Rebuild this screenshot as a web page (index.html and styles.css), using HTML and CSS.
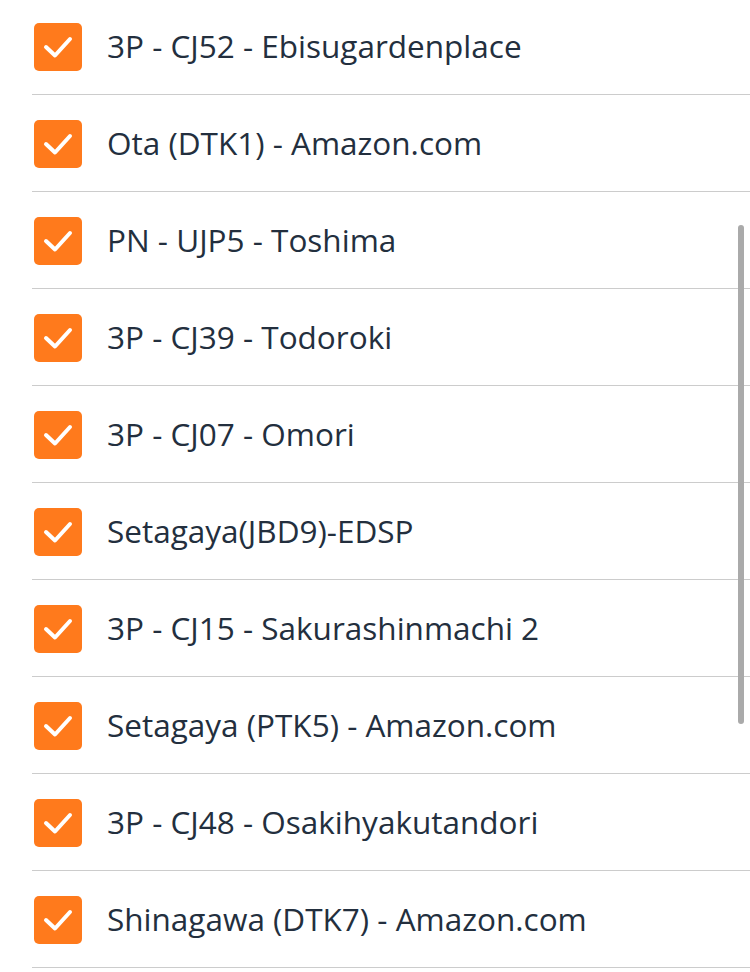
FILE: index.html
```html
<html>
    <head>
        <link rel="stylesheet" href="styles.css">
    </head>
    <body>
        <div class="list">
            <div class="row"><span class="box"><svg viewBox="0 0 48 48"><path d="M12 24 L21 32.5 L36 16"/></svg></span><span class="label">3P - CJ52 - Ebisugardenplace</span></div>
            <div class="row"><span class="box"><svg viewBox="0 0 48 48"><path d="M12 24 L21 32.5 L36 16"/></svg></span><span class="label">Ota (DTK1) - Amazon.com</span></div>
            <div class="row"><span class="box"><svg viewBox="0 0 48 48"><path d="M12 24 L21 32.5 L36 16"/></svg></span><span class="label">PN - UJP5 - Toshima</span></div>
            <div class="row"><span class="box"><svg viewBox="0 0 48 48"><path d="M12 24 L21 32.5 L36 16"/></svg></span><span class="label">3P - CJ39 - Todoroki</span></div>
            <div class="row"><span class="box"><svg viewBox="0 0 48 48"><path d="M12 24 L21 32.5 L36 16"/></svg></span><span class="label">3P - CJ07 - Omori</span></div>
            <div class="row"><span class="box"><svg viewBox="0 0 48 48"><path d="M12 24 L21 32.5 L36 16"/></svg></span><span class="label">Setagaya(JBD9)-EDSP</span></div>
            <div class="row"><span class="box"><svg viewBox="0 0 48 48"><path d="M12 24 L21 32.5 L36 16"/></svg></span><span class="label">3P - CJ15 - Sakurashinmachi 2</span></div>
            <div class="row"><span class="box"><svg viewBox="0 0 48 48"><path d="M12 24 L21 32.5 L36 16"/></svg></span><span class="label">Setagaya (PTK5) - Amazon.com</span></div>
            <div class="row"><span class="box"><svg viewBox="0 0 48 48"><path d="M12 24 L21 32.5 L36 16"/></svg></span><span class="label">3P - CJ48 - Osakihyakutandori</span></div>
            <div class="row"><span class="box"><svg viewBox="0 0 48 48"><path d="M12 24 L21 32.5 L36 16"/></svg></span><span class="label">Shinagawa (DTK7) - Amazon.com</span></div>
        </div>
        <div class="scrollbar"></div>
    </body>
</html>
```

FILE: styles.css
```css
body {
    margin: 0;
    background: #ffffff;
    font-family: "Open Sans", "Noto Sans", sans-serif;
    overflow: hidden;
}

.list {
    margin-top: -2px;
}

.row {
    display: flex;
    align-items: center;
    height: 94px;
    padding-top: 2px;
    margin-left: 32px;
    padding-left: 2px;
    border-bottom: 1px solid #cccccc;
}

.box {
    width: 48px;
    height: 48px;
    border-radius: 5px;
    background: #ff7a1c;
    flex-shrink: 0;
}

.box svg {
    display: block;
    width: 48px;
    height: 48px;
}

.box path {
    fill: none;
    stroke: #ffffff;
    stroke-width: 4;
    stroke-linecap: round;
    stroke-linejoin: round;
}

.label {
    margin-left: 25px;
    margin-top: -3px;
    font-size: 31.5px;
    color: #232f3e;
}

.scrollbar {
    position: absolute;
    left: 738px;
    top: 225px;
    width: 6px;
    height: 499px;
    border-radius: 3px;
    background: #aaaaaa;
}
```
